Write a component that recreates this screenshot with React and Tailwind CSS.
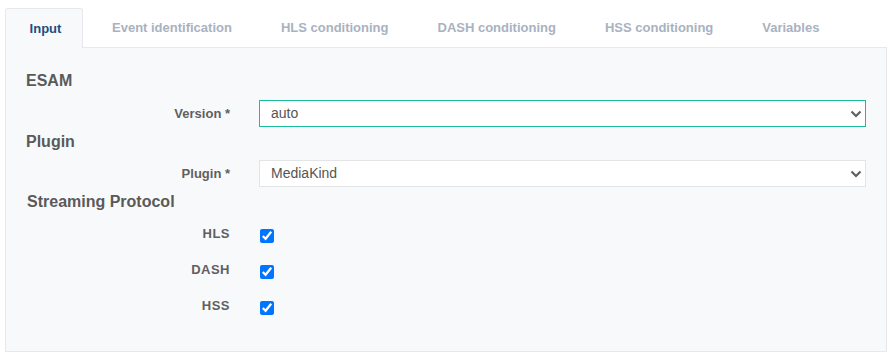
import React from "react";

function Chevron() {
  return (
    <svg className="pointer-events-none absolute right-[4px] top-1/2 -translate-y-1/2" width="12" height="8" viewBox="0 0 12 8">
      <polyline points="1.5,1.5 6,6 10.5,1.5" fill="none" stroke="#606060" strokeWidth="2.2" />
    </svg>
  );
}

function Select({ value, active }) {
  return (
    <div className="relative w-full">
      <select
        defaultValue={value}
        className={`block h-[27px] w-full appearance-none bg-white pl-[11px] pr-8 text-[14px] text-[#555] outline-none ${active ? "border border-[#1abc9c]" : "border border-[#e3e4e6]"}`}
      >
        <option>{value}</option>
      </select>
      <Chevron />
    </div>
  );
}

function Row({ label, children }) {
  return (
    <div className="flex items-center">
      <div className="w-[204px] shrink-0 text-right text-[13px] font-bold text-[#5f5f5f]">{label}</div>
      <div className="ml-[29px] flex-1">{children}</div>
    </div>
  );
}

function CheckRow({ label }) {
  return (
    <div className="flex h-[36px] items-center">
      <div className="w-[204px] shrink-0 -translate-y-[2px] text-right text-[13px] font-bold tracking-[0.5px] text-[#5f5f5f]">{label}</div>
      <div className="ml-[30px] flex items-center">
        <input type="checkbox" defaultChecked className="m-0 h-[14px] w-[14px] accent-[#0075ff]" />
      </div>
    </div>
  );
}

export default function App() {
  const tabs = ["Event identification", "HLS conditioning", "DASH conditioning", "HSS conditioning", "Variables"];
  return (
    <div className="h-[355px] w-[892px] bg-white px-[5px] pt-[8px]" style={{ fontFamily: '"Liberation Sans", Arial, sans-serif' }}>
      <div className="flex items-end">
        <div className="relative z-10 -mb-px flex h-[40px] w-[78px] items-center justify-center rounded-t-[3px] border border-b-0 border-[#e6e8eb] bg-[#f8f9fb] pl-[3px] text-[13px] font-bold text-[#1c4d86]">
          Input
        </div>
        <div className="ml-[29px] flex h-[39px] items-center gap-[49px]">
          {tabs.map((t) => (
            <div key={t} className="text-[13px] font-bold text-[#a9b2c0]">{t}</div>
          ))}
        </div>
      </div>
      <div className="h-[305px] w-[882px] border border-[#e6e8eb] bg-[#f8f9fb] pl-[20px] pr-[20px] pt-[23px]">
        <div className="h-[20px] text-[16px] font-bold leading-[20px] text-[#5a5a5a]">ESAM</div>
        <div className="mt-[9px]">
          <Row label="Version *">
            <Select value="auto" active />
          </Row>
        </div>
        <div className="mt-[5px] h-[20px] text-[16px] font-bold leading-[20px] text-[#5a5a5a]">Plugin</div>
        <div className="mt-[8px]">
          <Row label="Plugin *">
            <Select value="MediaKind" />
          </Row>
        </div>
        <div className="mt-[5px] h-[20px] pl-px text-[16px] font-bold leading-[20px] text-[#5a5a5a]">Streaming Protocol</div>
        <div className="mt-[6px]">
          <CheckRow label="HLS" />
          <CheckRow label="DASH" />
          <CheckRow label="HSS" />
        </div>
      </div>
    </div>
  );
}
